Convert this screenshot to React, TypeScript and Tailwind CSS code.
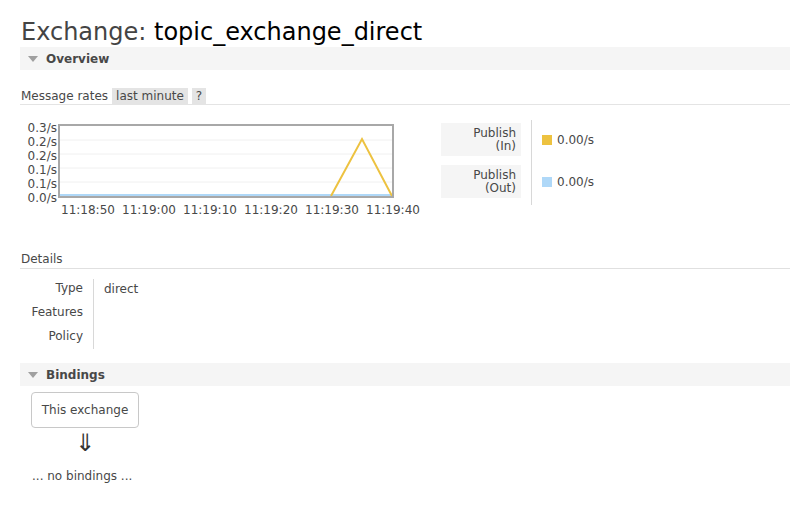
import React from 'react';

const yLabels = ['0.3/s', '0.2/s', '0.2/s', '0.1/s', '0.1/s', '0.0/s'];
const xLabels = ['11:18:50', '11:19:00', '11:19:10', '11:19:20', '11:19:30', '11:19:40'];

const SectionBar: React.FC<{ title: string }> = ({ title }) => (
  <div className="h-[23px] bg-[#f5f5f5] flex items-center pl-[8px] gap-[8px]">
    <svg width="10" height="6" viewBox="0 0 10 6">
      <polygon points="0,0 10,0 5,6" fill="#a0a0a0" />
    </svg>
    <span className="font-bold text-[#484848]">{title}</span>
  </div>
);

const RateChart: React.FC = () => (
  <div className="flex flex-col">
    <div className="flex">
      <div className="flex flex-col items-end w-[37px] pt-[2px] text-[#484848] leading-[14px]">
        {yLabels.map((l, i) => (
          <span key={i}>{l}</span>
        ))}
      </div>
      <svg width="336" height="74" className="ml-[1px] mt-[5px]">
        {[16, 30, 44, 58].map((y) => (
          <line key={y} x1="2" x2="334" y1={y} y2={y} stroke="#f0f0f0" strokeWidth="1" />
        ))}
        <line x1="2" x2="334" y1="71" y2="71" stroke="#afd8f8" strokeWidth="2" />
        <polyline points="273,72 304,15 334,72" fill="none" stroke="#edc240" strokeWidth="2" />
        <rect x="1" y="1" width="334" height="72" fill="none" stroke="#a8a8a8" strokeWidth="2" />
      </svg>
    </div>
    <div className="flex pl-[41px] text-[#484848] -mt-[4px]">
      {xLabels.map((l) => (
        <span key={l} className="w-[61px]">{l}</span>
      ))}
    </div>
  </div>
);

const Legend: React.FC = () => (
  <div className="flex ml-[14px] mt-[4px]">
    <div className="flex flex-col gap-[9px] w-[80px] text-[#484848]">
      <div className="bg-[#f5f5f5] h-[33px] flex flex-col items-end justify-center pr-[5px] leading-[13px]">
        <span>Publish</span>
        <span>(In)</span>
      </div>
      <div className="bg-[#f5f5f5] h-[33px] flex flex-col items-end justify-center pr-[5px] leading-[13px]">
        <span>Publish</span>
        <span>(Out)</span>
      </div>
    </div>
    <div className="w-px bg-[#d8d8d8] ml-[10px] -mt-[3px] h-[85px]" />
    <div className="flex flex-col pl-[10px] text-[#484848]">
      <div className="h-[33px] flex items-center gap-[5px]">
        <span className="w-[10px] h-[10px] bg-[#edc240]" />
        <span>0.00/s</span>
      </div>
      <div className="h-[33px] flex items-center gap-[5px] mt-[9px]">
        <span className="w-[10px] h-[10px] bg-[#afd8f8]" />
        <span>0.00/s</span>
      </div>
    </div>
  </div>
);

export default function App() {
  return (
    <div
      className="w-[790px] h-[509px] overflow-hidden bg-white pl-[20px] text-[12px] text-[#484848]"
      style={{ fontFamily: '"DejaVu Sans", Verdana, sans-serif' }}
    >
      <h1 className="pt-[17px] text-[24px] leading-[30px] pl-[1px] text-[#444]">
        Exchange: <span className="text-black">topic_exchange_direct</span>
      </h1>
      <div>
        <SectionBar title="Overview" />
      </div>

      <div className="mt-[18px] flex items-center h-[17px] border-b border-[#e4e4e4]">
        <span className="pl-[1px]">Message rates</span>
        <span className="ml-[4px] bg-[#e4e4e4] px-[4px] leading-[17px]">last minute</span>
        <span className="ml-[4px] bg-[#e4e4e4] px-[4px] leading-[17px]">?</span>
      </div>

      <div className="flex mt-[14px]">
        <RateChart />
        <Legend />
      </div>

      <div className="mt-[33px] pl-[1px] leading-[14px] pb-[2px] border-b border-[#e0e0e0]">Details</div>

      <div className="flex mt-[10px]">
        <div className="flex flex-col items-end w-[63px] leading-[24px] -mt-[3px]">
          <span>Type</span>
          <span>Features</span>
          <span>Policy</span>
        </div>
        <div className="w-px bg-[#d8d8d8] ml-[10px] h-[70px]" />
        <div className="pl-[10px] leading-[14px] pt-[3px]">direct</div>
      </div>

      <div className="mt-[14px]">
        <SectionBar title="Bindings" />
      </div>

      <div className="pl-[11px] mt-[6px] flex flex-col items-start">
        <div className="w-[108px] h-[36px] border border-[#c8c8c8] rounded-[4px] flex items-center justify-center">
          This exchange
        </div>
        <div className="w-[108px] text-center text-[24px] leading-[30px] text-[#333]">⇓</div>
        <div className="mt-[9px] pl-[1px]">... no bindings ...</div>
      </div>
    </div>
  );
}
